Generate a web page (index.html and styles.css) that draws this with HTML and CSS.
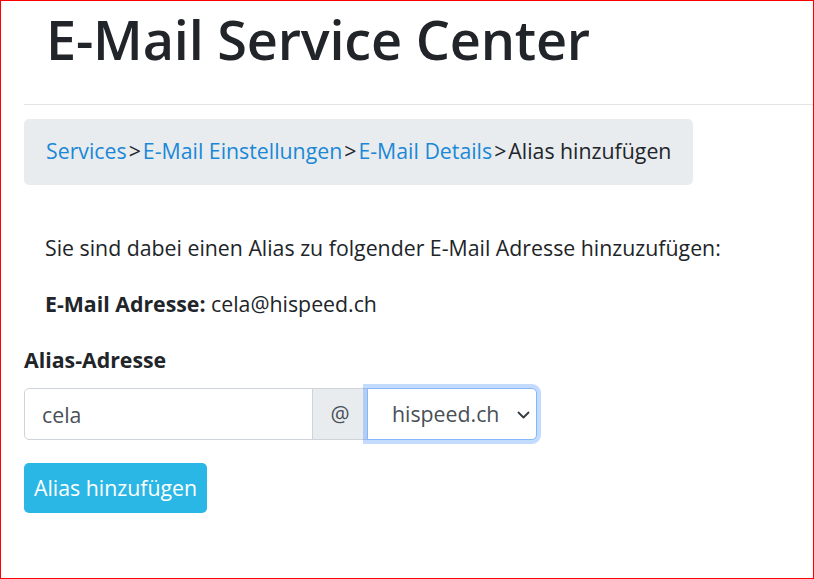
FILE: index.html
```html
<!DOCTYPE html>
<html lang="de">
<head>
<meta charset="utf-8">
<title>E-Mail Service Center</title>
<link rel="stylesheet" href="styles.css">
</head>
<body>
<div class="frame">
  <header class="page-header">
    <h1 class="title">E-Mail Service Center</h1>
  </header>
  <div class="content">
    <hr class="rule">
    <nav class="breadcrumb">
      <a href="#" class="crumb-link">Services</a><span class="sep">&gt;</span><a href="#" class="crumb-link">E-Mail Einstellungen</a><span class="sep">&gt;</span><a href="#" class="crumb-link">E-Mail Details</a><span class="sep">&gt;</span><span class="crumb-current">Alias hinzufügen</span>
    </nav>
    <div class="intro">
      <p class="intro-text">Sie sind dabei einen Alias zu folgender E-Mail Adresse hinzuzufügen:</p>
      <p class="intro-text"><strong>E-Mail Adresse:</strong> cela@hispeed.ch</p>
    </div>
    <form class="alias-form">
      <label class="field-label" for="alias">Alias-Adresse</label>
      <div class="input-group">
        <input id="alias" class="text-input" type="text" value="cela">
        <span class="addon">@</span>
        <div class="select">
          <span class="select-value">hispeed.ch</span>
          <svg class="chevron" width="13" height="8" viewBox="0 0 13 8"><path d="M1.5 1.5l5 5 5-5" fill="none" stroke="#343a40" stroke-width="1.8" stroke-linecap="round" stroke-linejoin="round"/></svg>
        </div>
      </div>
      <button type="button" class="btn">Alias hinzufügen</button>
    </form>
  </div>
</div>
</body>
</html>
```
FILE: styles.css
```css
* { box-sizing: border-box; }
html, body { margin: 0; padding: 0; }
body {
  font-family: "Open Sans", "Noto Sans", sans-serif;
  font-size: 21.3px;
  line-height: 30px;
  color: #212529;
  background: #fff;
}
.frame {
  width: 814px;
  height: 579px;
  border: 1px solid #ff0000;
  overflow: hidden;
}
.page-header {
  padding: 0 0 0 45px;
}
.title {
  margin: 0;
  font-size: 54px;
  line-height: 76px;
  font-weight: 600;
  letter-spacing: -0.2px;
  color: #212529;
}
.content {
  padding-left: 23px;
}
.rule {
  margin: 27px 0 0 0;
  border: 0;
  border-top: 1px solid #e4e4e4;
  height: 0;
}
.breadcrumb {
  display: inline-flex;
  margin-top: 14px;
  padding: 17px 22px 19px 22px;
  background: #e9ecef;
  border-radius: 5px;
  white-space: nowrap;
}
.crumb-link {
  color: #1a88d6;
  text-decoration: none;
}
.sep { color: #212529; padding: 0 2px; }
.crumb-current { color: #212529; }
.intro {
  padding: 48px 0 0 21px;
}
.intro-text {
  margin: 0 0 26px 0;
}
.intro-text strong { font-weight: 700; }
.alias-form {
  display: flex;
  flex-direction: column;
  align-items: flex-start;
}
.field-label {
  font-weight: 700;
  margin-bottom: 13px;
}
.input-group {
  display: flex;
  height: 52px;
}
.text-input {
  width: 289px;
  height: 52px;
  padding: 0 17px;
  font: inherit;
  color: #495057;
  border: 1px solid #ced4da;
  border-radius: 5px 0 0 5px;
  outline: none;
}
.addon {
  width: 56px;
  margin-left: -1px;
  display: flex;
  align-items: center;
  justify-content: center;
  background: #e9ecef;
  border: 1px solid #ced4da;
  color: #495057;
}
.select {
  width: 170px;
  margin-left: -1px;
  display: flex;
  align-items: center;
  justify-content: space-between;
  padding: 0 6px 0 24px;
  border: 1px solid #86b7fe;
  border-radius: 0 5px 5px 0;
  box-shadow: 0 0 0 4px rgba(13, 110, 253, 0.25);
  color: #495057;
  background: #fff;
}
.chevron { display: block; margin-top: 1px; }
.btn {
  margin-top: 23px;
  height: 50px;
  padding: 0 10px;
  font: inherit;
  color: #fff;
  background: #2ab7e5;
  border: 0;
  border-radius: 5px;
}
```
